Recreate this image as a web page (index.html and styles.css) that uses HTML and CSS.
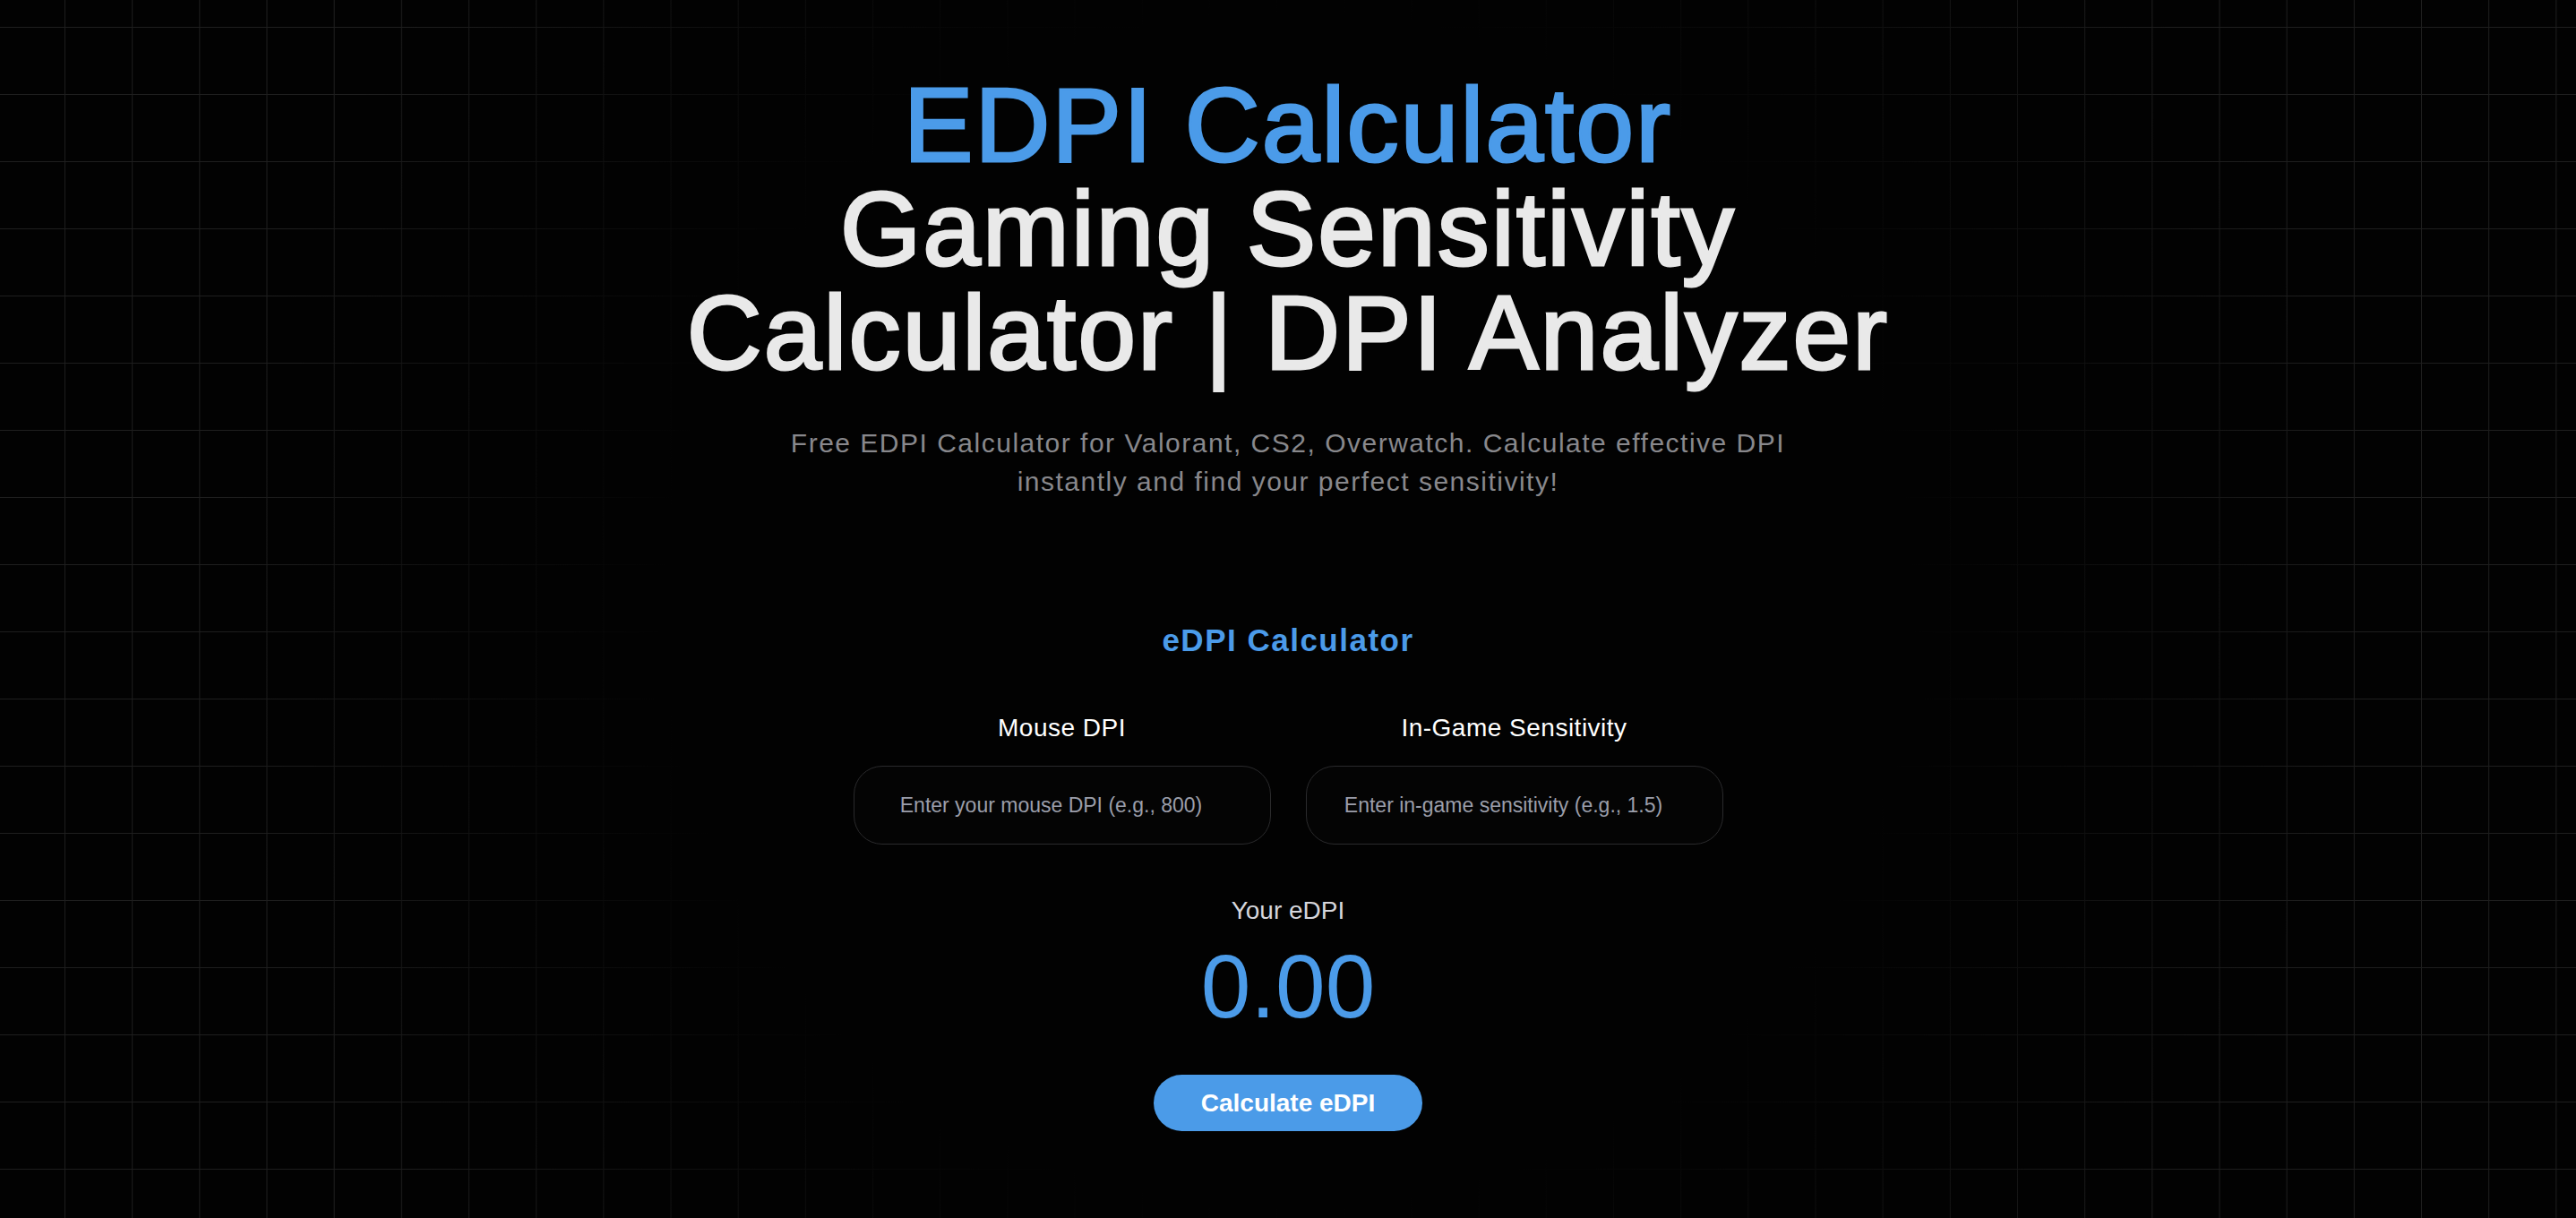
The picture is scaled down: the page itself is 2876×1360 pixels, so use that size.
FILE: index.html
```html
<!DOCTYPE html>
<html lang="en">
<head>
<meta charset="utf-8">
<title>EDPI Calculator - Gaming Sensitivity Calculator | DPI Analyzer</title>
<link rel="stylesheet" href="styles.css">
</head>
<body>
<main class="page">
  <header class="hero">
    <h1 class="hero-title">
      <span class="hero-accent">EDPI Calculator</span>
      <span class="hero-line">Gaming Sensitivity</span>
      <span class="hero-line">Calculator | DPI Analyzer</span>
    </h1>
    <p class="hero-sub">Free EDPI Calculator for Valorant, CS2, Overwatch. Calculate effective DPI instantly and find your perfect sensitivity!</p>
  </header>

  <section class="calc">
    <h2 class="calc-title">eDPI Calculator</h2>
    <div class="calc-fields">
      <label class="field">
        <span class="field-label">Mouse DPI</span>
        <input class="field-input" type="number" placeholder="Enter your mouse DPI (e.g., 800)">
      </label>
      <label class="field">
        <span class="field-label">In-Game Sensitivity</span>
        <input class="field-input" type="number" placeholder="Enter in-game sensitivity (e.g., 1.5)">
      </label>
    </div>
    <div class="result">
      <div class="result-label">Your eDPI</div>
      <div class="result-value">0.00</div>
    </div>
    <button class="calc-btn" type="button">Calculate eDPI</button>
  </section>
</main>
</body>
</html>
```

FILE: styles.css
```css
* {
  box-sizing: border-box;
}

html, body {
  margin: 0;
  padding: 0;
}

body {
  min-height: 100vh;
  font-family: "Liberation Sans", Arial, Helvetica, sans-serif;
  color: #ffffff;
  background-color: #020202;
  background-image:
    radial-gradient(ellipse 1200px 1150px at 50% 50%, #020202 58%, rgba(2, 2, 2, 0) 100%),
    linear-gradient(to right, #1e1e1e 1px, transparent 1px),
    linear-gradient(to bottom, #1e1e1e 1px, transparent 1px);
  background-size: 100% 100%, 75.18px 75px, 75.18px 75px;
  background-position: 0 0, 72px 0, 0 30px;
  background-repeat: no-repeat, repeat, repeat;
  overflow: hidden;
}

.page {
  display: flex;
  flex-direction: column;
  align-items: center;
  padding-top: 82px;
  text-align: center;
}

.hero {
  display: flex;
  flex-direction: column;
  align-items: center;
}

.hero-title {
  margin: 0;
  font-size: 116px;
  line-height: 116px;
  font-weight: 400;
  letter-spacing: 2.2px;
  color: #e9e9e9;
  -webkit-text-stroke: 3px #e9e9e9;
}

.hero-accent,
.hero-line {
  display: block;
}

.hero-accent {
  color: #4b9be9;
  -webkit-text-stroke: 3px #4b9be9;
}

.hero-sub {
  margin: 43px 0 0;
  max-width: 1180px;
  font-size: 30px;
  line-height: 43px;
  letter-spacing: 1.5px;
  color: #88888c;
}

.calc {
  display: flex;
  flex-direction: column;
  align-items: center;
  margin-top: 134px;
}

.calc-title {
  margin: 0;
  font-size: 35px;
  line-height: 44px;
  font-weight: 700;
  letter-spacing: 1.5px;
  color: #4b9be9;
}

.calc-fields {
  display: grid;
  grid-template-columns: 466px 466px;
  column-gap: 39px;
  margin-top: 58px;
}

.field {
  display: flex;
  flex-direction: column;
  align-items: center;
  gap: 24px;
}

.field-label {
  font-size: 28px;
  line-height: 36px;
  letter-spacing: 0.5px;
  color: #ffffff;
}

.field-input {
  width: 466px;
  height: 88px;
  padding: 0 24px 0 0;
  border: 1px solid #2a2a2c;
  border-radius: 32px;
  background: #040404;
  color: #ffffff;
  font-family: "Liberation Sans", Arial, Helvetica, sans-serif;
  font-size: 23px;
  text-align: center;
  outline: none;
  -moz-appearance: textfield;
}

.field-input::-webkit-outer-spin-button,
.field-input::-webkit-inner-spin-button {
  -webkit-appearance: none;
  margin: 0;
}

.field-input::placeholder {
  color: #9b9eaa;
  opacity: 1;
}

.result {
  display: flex;
  flex-direction: column;
  align-items: center;
  margin-top: 56px;
}

.result-label {
  font-size: 28px;
  line-height: 36px;
  color: #d6d6dc;
}

.result-value {
  margin-top: 11px;
  font-size: 100px;
  line-height: 110px;
  color: #4b9be9;
}

.calc-btn {
  margin-top: 44px;
  height: 63px;
  padding: 0 53px;
  border: none;
  border-radius: 32px;
  background: #4b9be8;
  color: #ffffff;
  font-family: "Liberation Sans", Arial, Helvetica, sans-serif;
  font-size: 28px;
  line-height: 63px;
  font-weight: 700;
  cursor: pointer;
}
```
